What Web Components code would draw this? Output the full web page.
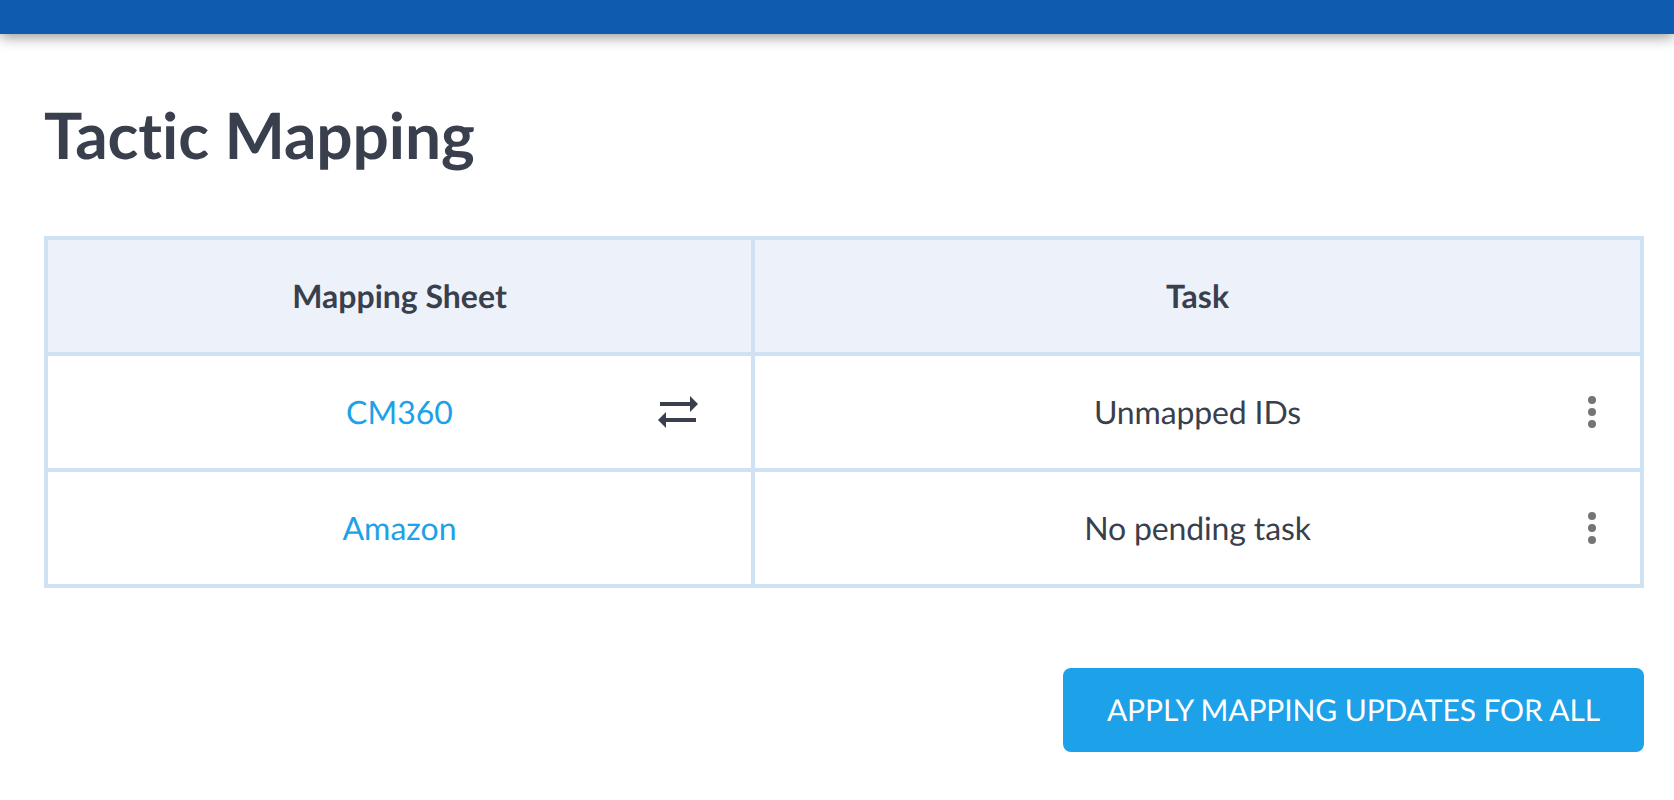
<!DOCTYPE html>
<html lang="en">
<head>
<meta charset="utf-8">
<title>Tactic Mapping</title>
<style>
html,body{margin:0;padding:0;background:#fff;font-family:Lato,"Liberation Sans",sans-serif;color:#3a3f4d;text-rendering:geometricPrecision;}
</style>
</head>
<body>
<app-bar></app-bar>
<mapping-page>
  <mapping-table>
    <mapping-cell kind="head">Mapping Sheet</mapping-cell>
    <mapping-cell kind="head">Task</mapping-cell>
    <mapping-cell kind="link" action="swap">CM360</mapping-cell>
    <mapping-cell action="more">Unmapped IDs</mapping-cell>
    <mapping-cell kind="link">Amazon</mapping-cell>
    <mapping-cell action="more">No pending task</mapping-cell>
  </mapping-table>
  <primary-button>APPLY MAPPING UPDATES FOR ALL</primary-button>
</mapping-page>
<script>
class Base extends HTMLElement{
  constructor(html){super();this.attachShadow({mode:'open'}).innerHTML=html;}
}
customElements.define('app-bar',class extends Base{constructor(){super(`<style>
:host{display:block;height:34px;background:#0f5bb0;box-shadow:0 3px 14px rgba(0,0,0,.42);position:relative}
</style>`);}});
customElements.define('mapping-page',class extends Base{constructor(){super(`<style>
:host{display:block;padding:0 30px 0 44px}
h1{margin:0 0 63px;padding-top:63px;font:700 64px/76px Lato,"Liberation Sans",sans-serif;font-variant-ligatures:none;letter-spacing:-.1px;color:#3a3f4d}
</style><h1>Tactic Mapping</h1><slot></slot>`);}});
customElements.define('mapping-table',class extends Base{constructor(){super(`<style>
:host{display:grid;grid-template-columns:703px 885px;grid-auto-rows:112px;gap:4px;padding:4px;background:#cfe2f3;width:1592px}
</style><slot></slot>`);}});
customElements.define('mapping-cell',class extends Base{constructor(){super(`<style>
:host{display:flex;align-items:center;justify-content:center;position:relative;background:#fff;font:400 32px/40px Lato,"Liberation Sans",sans-serif;letter-spacing:-.15px;color:#3a3f4d}
:host([kind=head]){background:#edf2fa;font-weight:700;letter-spacing:0}
:host([kind=link]){color:#1da1e8;letter-spacing:0}
svg{position:absolute;display:block}
.swap{left:610px;top:40px}
.more{left:833px;top:40px}
</style><slot></slot><span id="a"></span>`);}
connectedCallback(){
  const a=this.getAttribute('action'),s=this.shadowRoot.getElementById('a');
  if(a==='swap')s.innerHTML='<svg class="swap" width="40" height="32" viewBox="0 0 40 32" fill="#3a3f4d"><path d="M2 6h30V0l8 8-8 8v-6H2z"/><path d="M38 22H8v-6l-8 8 8 8v-6h30z"/></svg>';
  if(a==='more')s.innerHTML='<svg class="more" width="8" height="32" viewBox="0 0 8 32" fill="#757575"><circle cx="4" cy="4" r="4"/><circle cx="4" cy="16" r="4"/><circle cx="4" cy="28" r="4"/></svg>';
}});
customElements.define('primary-button',class extends Base{constructor(){super(`<style>
:host{display:flex;align-items:center;justify-content:center;box-sizing:border-box;width:581px;height:84px;margin:80px 0 0 1019px;background:#1da1e8;border-radius:8px;color:#fff;font:400 30px/36px Lato,"Liberation Sans",sans-serif;letter-spacing:-.1px}
</style><slot></slot>`);}});
</script>
</body>
</html>
